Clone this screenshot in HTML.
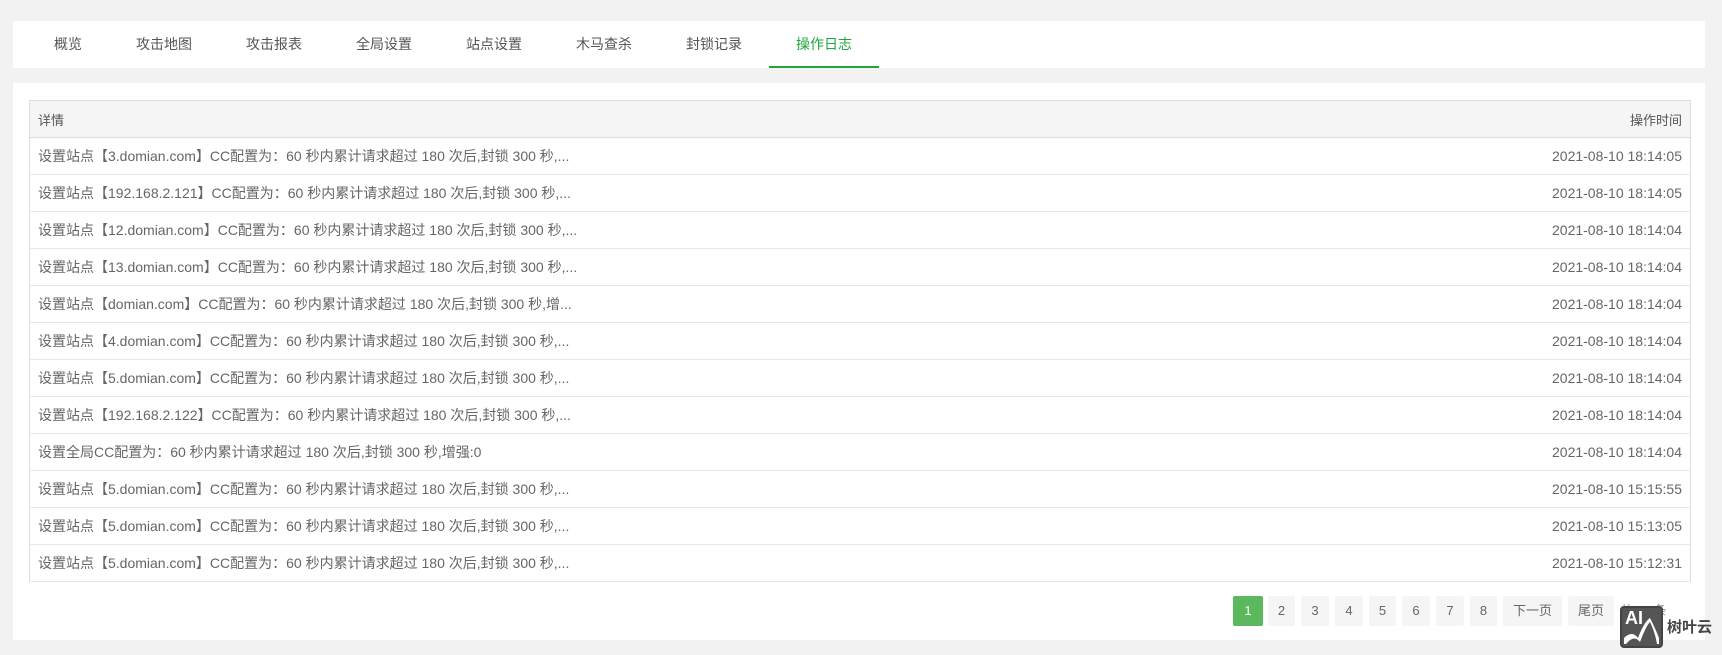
<!DOCTYPE html>
<html><head><meta charset="utf-8"><style>
*{margin:0;padding:0;box-sizing:border-box}
body{width:1722px;height:655px;background:#f2f2f2;font-family:"Liberation Sans","Noto Sans CJK SC",sans-serif;color:#666;position:relative;overflow:hidden}
.nav{position:absolute;left:13px;top:21px;width:1692px;height:47px;background:#fff}
.nav span{position:absolute;top:0;width:110px;height:47px;line-height:47px;text-align:center;font-size:14px;color:#555}
.nav span.on{color:#20a53a;border-bottom:2px solid #20a53a}
.box{position:absolute;left:13px;top:83px;width:1692px;height:557px;background:#fff}
table{position:absolute;left:16px;top:17px;width:1662px;border-collapse:collapse;border:1px solid #ddd;font-size:14px}
td,th{height:37px;padding:0 8px;border-bottom:1px solid #e6e6e6;font-weight:normal;text-align:left;color:#666;white-space:nowrap}
th{background:#f5f5f5;font-size:13px;color:#555;border-bottom:1px solid #ddd}
.r{text-align:right}
.pg{position:absolute;top:513px;height:30px}
.pg b{position:absolute;top:0;height:30px;line-height:30px;text-align:center;font-weight:normal;font-size:13px;background:#f5f5f5;color:#666;border-radius:2px}
.pg b.on{background:#5cb85c;color:#fff}
</style></head><body>
<div class="nav">
<span style="left:14px;width:82px">概览</span><span style="left:96px">攻击地图</span><span style="left:206px">攻击报表</span><span style="left:316px">全局设置</span><span style="left:426px">站点设置</span><span style="left:536px">木马查杀</span><span style="left:646px">封锁记录</span><span class="on" style="left:756px">操作日志</span>
</div>
<div class="box">
<table>
<tr><th>详情</th><th class="r">操作时间</th></tr>
<tr><td>设置站点【3.domian.com】CC配置为：60 秒内累计请求超过 180 次后,封锁 300 秒,...</td><td class="r">2021-08-10 18:14:05</td></tr>
<tr><td>设置站点【192.168.2.121】CC配置为：60 秒内累计请求超过 180 次后,封锁 300 秒,...</td><td class="r">2021-08-10 18:14:05</td></tr>
<tr><td>设置站点【12.domian.com】CC配置为：60 秒内累计请求超过 180 次后,封锁 300 秒,...</td><td class="r">2021-08-10 18:14:04</td></tr>
<tr><td>设置站点【13.domian.com】CC配置为：60 秒内累计请求超过 180 次后,封锁 300 秒,...</td><td class="r">2021-08-10 18:14:04</td></tr>
<tr><td>设置站点【domian.com】CC配置为：60 秒内累计请求超过 180 次后,封锁 300 秒,增...</td><td class="r">2021-08-10 18:14:04</td></tr>
<tr><td>设置站点【4.domian.com】CC配置为：60 秒内累计请求超过 180 次后,封锁 300 秒,...</td><td class="r">2021-08-10 18:14:04</td></tr>
<tr><td>设置站点【5.domian.com】CC配置为：60 秒内累计请求超过 180 次后,封锁 300 秒,...</td><td class="r">2021-08-10 18:14:04</td></tr>
<tr><td>设置站点【192.168.2.122】CC配置为：60 秒内累计请求超过 180 次后,封锁 300 秒,...</td><td class="r">2021-08-10 18:14:04</td></tr>
<tr><td>设置全局CC配置为：60 秒内累计请求超过 180 次后,封锁 300 秒,增强:0</td><td class="r">2021-08-10 18:14:04</td></tr>
<tr><td>设置站点【5.domian.com】CC配置为：60 秒内累计请求超过 180 次后,封锁 300 秒,...</td><td class="r">2021-08-10 15:15:55</td></tr>
<tr><td>设置站点【5.domian.com】CC配置为：60 秒内累计请求超过 180 次后,封锁 300 秒,...</td><td class="r">2021-08-10 15:13:05</td></tr>
<tr><td>设置站点【5.domian.com】CC配置为：60 秒内累计请求超过 180 次后,封锁 300 秒,...</td><td class="r">2021-08-10 15:12:31</td></tr>
</table>
<div class="pg" style="left:0">
<b class="on" style="left:1220px;width:30px">1</b>
<b style="left:1255px;width:27px">2</b>
<b style="left:1288px;width:28px">3</b>
<b style="left:1322px;width:28px">4</b>
<b style="left:1356px;width:27px">5</b>
<b style="left:1389px;width:28px">6</b>
<b style="left:1423px;width:28px">7</b>
<b style="left:1457px;width:27px">8</b>
<b style="left:1490px;width:59px">下一页</b>
<b style="left:1555px;width:46px">尾页</b>
<span style="position:absolute;left:1607px;top:0;line-height:30px;font-size:13px;color:#999;white-space:nowrap">共117条</span>
</div>
</div>
<div style="position:absolute;left:1620px;top:606px;width:43px;height:42px;background:#555;border-radius:4px;border:2px solid #444">
<span style="position:absolute;left:3px;top:0;color:#fff;font-weight:bold;font-size:18px">AI</span>
<svg width="39" height="38" style="position:absolute;left:0;top:0"><path d="M2 36 L2 30 Q10 22 16 30 Q22 14 28 10 Q34 22 37 30 L37 36Z" fill="#fff"/><path d="M4 36 Q12 26 18 34 Q24 18 28 14 Q33 24 35 36Z" fill="#555"/></svg>
</div>
<span style="position:absolute;left:1667px;top:616px;font-size:15px;font-weight:bold;color:#444">树叶云</span>
</body></html>
